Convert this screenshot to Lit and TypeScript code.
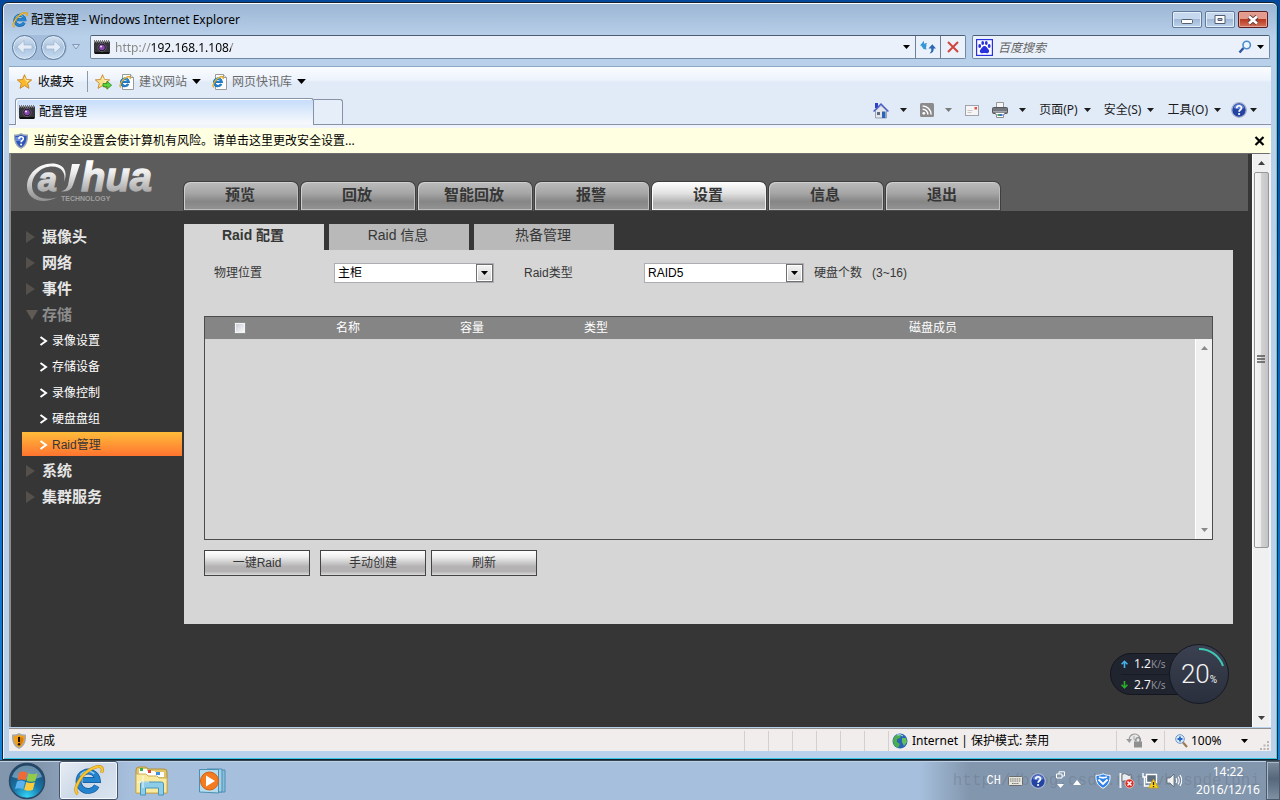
import { LitElement, html, css, svg } from "lit";
import { customElement, property, state } from "lit/decorators.js";
import { classMap } from "lit/directives/class-map.js";

const caret = (cls = "") => html`<svg class="caret ${cls}" width="7" height="4" viewBox="0 0 7 4" aria-hidden="true"><path d="M0 0h7L3.5 4z" fill="currentColor" /></svg>`;

const ieGlyph = svg`
  <path d="M24.5 21.5A10 10 0 1 1 25.6 15.5H10" fill="none" stroke="#12599f" stroke-width="6"/>
  <path d="M24.5 21.5A10 10 0 1 1 25.6 15.5H10" fill="none" stroke="#2383cc" stroke-width="4.600"/>
  <path d="M7.500 11A9.500 9.500 0 0 1 22 9" fill="none" stroke="#8fd6f7" stroke-width="1.600"/>
  <path d="M5 30C-1 26 8 9 20 3.500C28-.5 32 2 29.500 8" fill="none" stroke="#c98a12" stroke-width="3.200"/>
  <path d="M5 30C-1 26 8 9 20 3.500C28-.5 32 2 29.500 8" fill="none" stroke="#f8c934" stroke-width="2"/>`;

const ieIcon = (size: number) => html`<svg width=${size} height=${size} viewBox="0 0 32 32" aria-hidden="true">${ieGlyph}</svg>`;

const iePage = html`<svg width="16" height="16" viewBox="0 0 16 16" aria-hidden="true">
  <path d="M3.500.5h8l3 3v12h-11z" fill="#fdfdfd" stroke="#9a9a9a" /><path d="M11.500.5v3h3" fill="#e4e4e4" stroke="#9a9a9a" />
  <svg x="0" y="2" width="12" height="12" viewBox="0 0 32 32">${ieGlyph}</svg></svg>`;

const camIcon = html`<svg width="16" height="14" viewBox="0 0 16 14" aria-hidden="true">
  <rect y="1.500" width="16" height="12" fill="#34343a" />
  <path d="M0 1.500h16" stroke="#777" stroke-dasharray="1 1" stroke-width="3" />
  <path d="M1 13h14" stroke="#111" stroke-width="2" />
  <circle cx="8" cy="7.500" r="4.200" fill="#201c28" stroke="#5f5c66" /><circle cx="8" cy="7.500" r="2.800" fill="#8a46b0" /><circle cx="7" cy="6.500" r="1.100" fill="#e6d6f4" /></svg>`;

const star = (add: boolean) => html`<svg width="17" height="16" viewBox="0 0 17 16" aria-hidden="true">
  <path d="M7.500.7l2 4.800 5.200.4-4 3.400 1.300 5.100-4.500-2.800L3 14.400l1.300-5.100-4-3.400 5.200-.4z" fill=${add ? "#fbe08a" : "#fbb829"} stroke="#c5862a" stroke-width=".9" />
  <path d="M7.500 3l1.100 3.200 3 .3-2.400 1.900" fill="none" stroke="#fff0b0" />
  ${add ? svg`<path d="M8 9.500h4v-2.300l4.600 4-4.600 4v-2.500H8z" fill="#5ed13c" stroke="#238a1c" stroke-width=".8"/>` : null}</svg>`;

const helpIcon = html`<svg width="16" height="16" viewBox="0 0 16 16" aria-hidden="true">
  <circle cx="8" cy="8" r="7.300" fill="#2444a4" stroke="#a9b4cc" stroke-width="1.300" /><path d="M2.500 6a5.800 5.800 0 0 1 11 0q-5.500 2-11 0z" fill="#5f80d8" />
  <path d="M5.700 6.200C5.700 3 10.500 3 10.500 6c0 1.800-2.400 1.800-2.400 3.800" fill="none" stroke="#fff" stroke-width="1.700" /><circle cx="8.100" cy="12" r="1.100" fill="#fff" /></svg>`;

const shieldPath = "M7 .8c2 1.200 4 1.500 6.300 1.400C13.600 8 12.500 12.500 7 15.200 1.500 12.500.4 8 .7 2.200 3 2.300 5 2 7 .8z";
const shieldHelp = html`<svg width="14" height="16" viewBox="0 0 14 16" aria-hidden="true">
  <path d=${shieldPath} fill="#2f55b9" stroke="#9aa5b8" stroke-width="1.400" /><path d="M2 4q5 0 5-2v6H2z" fill="#6a8be0" />
  <path d="M4.900 6c0-3 4.400-3 4.400-.2 0 1.700-2.200 1.700-2.200 3.400" fill="none" stroke="#fff" stroke-width="1.600" /><circle cx="7.100" cy="11.500" r="1" fill="#fff" /></svg>`;
const shieldWarn = html`<svg width="14" height="16" viewBox="0 0 14 16" aria-hidden="true">
  <path d=${shieldPath} fill="#f0a01c" stroke="#a8a8a8" stroke-width="1.500" /><path d="M7 3v10q4-2 4.500-8Q9 5 7 3z" fill="#d87c0c" />
  <path d="M7 4v5" stroke="#1a1208" stroke-width="2" /><circle cx="7" cy="11.300" r="1.200" fill="#1a1208" /></svg>`;

const homeIcon = html`<svg width="16" height="17" viewBox="0 0 16 17" aria-hidden="true">
  <path d="M2 1h3v5H2z" fill="#2f3fd0" /><path d="M2.500 8.500L8 3.500l5.500 5v7.500h-11z" fill="#e2e5ea" stroke="#8790a4" stroke-width=".8" />
  <path d="M.6 9.500L8 2l7.400 7.500" fill="none" stroke="#4a5cc8" stroke-width="1.500" />
  <path d="M9 9.500h3.500v6.500H9z" fill="#2f62b4" /><path d="M4 10h3v3H4z" fill="#5f6b80" /></svg>`;
const rssIcon = html`<svg width="14" height="14" viewBox="0 0 14 14" aria-hidden="true"><rect width="14" height="14" rx="1.500" fill="#8b8b8b" />
  <circle cx="3.800" cy="10.300" r="1.400" fill="#fff" /><path d="M2.600 6.200a5.200 5.200 0 0 1 5.300 5.300M2.600 3a8.500 8.500 0 0 1 8.500 8.500" fill="none" stroke="#fff" stroke-width="1.500" /></svg>`;
const mailIcon = html`<svg width="14" height="11" viewBox="0 0 14 11" aria-hidden="true"><rect x=".5" y=".5" width="13" height="10" fill="#f5f5f5" stroke="#a0a4aa" />
  <path d="M2.500 5.500h5M2.500 7.500h4" stroke="#c9c9c9" /><path d="M9.500 2h2.500v2.500H9.500z" fill="#e05248" /></svg>`;
const printIcon = html`<svg width="16" height="16" viewBox="0 0 16 16" aria-hidden="true"><path d="M4.500.5h7V6h-7z" fill="#f7f7f7" stroke="#989898" />
  <rect x=".5" y="5.500" width="15" height="6" rx="1" fill="#74777d" stroke="#54575c" /><path d="M1 9.500h14" stroke="#a2a5aa" />
  <path d="M3.500 10.500h9v2h-1v3h-7v-3h-1z" fill="#fff" stroke="#8c8c8c" /><path d="M5.500 13h2.500" stroke="#3f9b6d" stroke-width="2" /><path d="M8 13h2.500" stroke="#3d6fc4" stroke-width="2" /></svg>`;

const scrollArrow = (down: boolean) => html`<svg width="7" height="4" viewBox="0 0 7 4" aria-hidden="true"><path d=${down ? "M0 0h7L3.5 4z" : "M0 4h7L3.5 0z"} fill="currentColor" /></svg>`;

const reset = css`
  *, *::before, *::after { box-sizing: border-box; }
  svg { display: block; flex: none; }
  button { font: inherit; color: inherit; background: none; border: 0; padding: 0; margin: 0; cursor: pointer; }
  a { color: inherit; text-decoration: none; }
  ul { list-style: none; margin: 0; padding: 0; }
`;

@customElement("browser-chrome")
export class BrowserChrome extends LitElement {
  static styles = [reset, css`
    :host { display: block; font: 12px/16px "Noto Sans", "Noto Sans CJK SC", sans-serif; color: #000; }
    .title { display: flex; align-items: center; height: 31px; padding: 2px 3px 0 3px; gap: 3px; }
    .title h1 { flex: 1; margin: 0; font-size: 12px; font-weight: 400; }
    .controls { display: flex; gap: 3px; align-items: center; }
    .ctl { display: grid; place-items: center; width: 30px; height: 17px; border: 1px solid #63799a; border-radius: 2px; box-shadow: inset 0 0 0 1px #e3eefb; background: linear-gradient(#c6d8ee 48%, #a1b9d6 50%, #bcd3ee); }
    .ctl.close { border-color: #5b1d1d; box-shadow: inset 0 0 0 1px #e6a498; background: linear-gradient(#e29b8d 48%, #b83a20 50%, #d2735c); }
    .nav { display: flex; align-items: center; height: 26px; margin-bottom: 6px; padding: 0 1px 0 3px; }
    .travel { display: flex; align-items: center; gap: 4px; margin-right: 5px; padding-right: 1px; border-radius: 13px; background: #a4bdda; }
    .orb { display: grid; place-items: center; width: 25px; height: 25px; border: 1px solid #5f7a9c; border-radius: 50%; background: linear-gradient(#d5e2f1, #a9c3df 50%, #c9ddf3); box-shadow: inset 0 0 0 1px #dce9f7; }
    .recent { margin-right: 10px; }
    .field { display: flex; align-items: center; height: 24px; border: 1px solid #7188a4; border-top-color: #4c5d74; border-radius: 2px; background: #eaf1fa; }
    .address { flex: 1; padding-left: 3px; gap: 5px; margin-right: 6px; }
    .address input, .search input { flex: 1; min-width: 0; border: 0; outline: 0; padding: 0; font: inherit; height: 20px; }
    .address input { color: transparent; caret-color: #000; background: linear-gradient(90deg, #858585 36px, #000 36px, #000 116px, #858585 116px); background-clip: text; -webkit-background-clip: text; }
    .address .cell { display: grid; place-items: center; width: 25px; height: 22px; border-left: 1px solid #6f8096; margin-left: -5px; }
    .address .drop { width: 18px; border: 0; }
    .search { width: 298px; padding: 0 5px 0 3px; gap: 5px; }
    .search input { background: none; font-style: italic; }
    .search input::placeholder { color: #666; opacity: 1; }
    .bars { border-top: 1px solid #8da6c4; background: linear-gradient(#fafcff, #edf3fc 13px, #e1ebf8 15px, #e1ebf8 56px, #f2f5fb 59px); padding-bottom: 3px; }
    .favs { display: flex; align-items: center; height: 29px; padding-left: 8px; }
    .fav { display: flex; align-items: center; gap: 4px; color: #6b6b6b; }
    .fav.strong { color: #000; }
    .fav + .fav { margin-left: 11px; }
    .fav .caret { width: 9px; height: 5px; color: #000; margin-left: 1px; }
    .sep { width: 1px; height: 21px; background: #8d99a8; margin: 0 7px 0 13px; }
    .favs .add { margin-right: 7px; }
    .tabs { display: flex; align-items: stretch; height: 29px; border-bottom: 1px solid #8792a4; padding: 2px 14px 0 6px; }
    .tab { display: flex; align-items: center; gap: 4px; width: 299px; padding-left: 3px; margin-bottom: -1px; border: 1px solid #8792a4; border-bottom: 0; border-radius: 3px 3px 0 0; background: linear-gradient(#c4dcfb, #f4f7fc 90%); box-shadow: inset 1px 1px #fff; text-align: left; }
    .newtab { width: 29px; margin: 1px 0 0; border: 1px solid #8792a4; border-left: 0; border-bottom: 0; border-radius: 0 3px 0 0; background: #e6eef9; }
    .cmds { display: flex; align-items: center; gap: 13px; margin-left: auto; padding-bottom: 2px; color: #1c1c1c; }
    .cmd { display: flex; align-items: center; gap: 6px; }
    .cmd.split { gap: 11px; }
    .cmd.tight { gap: 3px; margin-left: -3px; }
    .cmd.off .caret { color: #7b7b7b; }
    .info { display: flex; align-items: center; height: 25px; padding: 0 6px 0 5px; gap: 5px; background: #ffffe1; }
    .info a { flex: 1; }
    @media (max-width: 700px) { .search, .cmds { display: none; } }
  `];

  render() {
    return html`
      <header class="title">
        ${ieIcon(16)}
        <h1>配置管理 - Windows Internet Explorer</h1>
        <div class="controls">
          <button class="ctl" aria-label="最小化"><svg width="12" height="9" viewBox="0 0 12 9"><rect x=".5" y="4.500" width="11" height="4" rx="1" fill="#fff" stroke="#535f70" /></svg></button>
          <button class="ctl" aria-label="最大化"><svg width="12" height="10" viewBox="0 0 12 10"><path d="M1 .5h10v8H1zM4 3.500v2h4v-2z" fill="#fff" fill-rule="evenodd" stroke="#535f70" /></svg></button>
          <button class="ctl close" aria-label="关闭"><svg width="12" height="10" viewBox="0 0 12 10"><path d="M2 1.500l8 7M10 1.500l-8 7" stroke="#5a3a3a" stroke-width="4.400" /><path d="M2 1.500l8 7M10 1.500l-8 7" stroke="#fff" stroke-width="2.600" /></svg></button>
        </div>
      </header>
      <div class="nav">
        <div class="travel">
          <button class="orb" aria-label="后退"><svg width="17" height="16" viewBox="0 0 17 16"><path d="M1 8l7-6.500V6h8v4H8v4.500z" fill="#e4edf7" stroke="#9fb4ce" stroke-width=".7" /></svg></button>
          <button class="orb" aria-label="前进"><svg width="17" height="16" viewBox="0 0 17 16"><path d="M16 8L9 1.500V6H1v4h8v4.500z" fill="#e4edf7" stroke="#9fb4ce" stroke-width=".7" /></svg></button>
        </div>
        <button class="recent" aria-label="最近的网页"><svg width="8" height="6" viewBox="0 0 8 6"><path d="M.5.500h7L4 5z" fill="#d3e0f0" stroke="#8199b8" /></svg></button>
        <div class="field address">
          ${camIcon}
          <input aria-label="地址" value="http://192.168.1.108/" />
          <button class="cell drop" aria-label="显示地址列表">${caret()}</button>
          <button class="cell" aria-label="刷新"><svg width="16" height="14" viewBox="0 0 16 14"><path d="M0 5.500L4 .8v3c0 0 2-.8 3.300-.3C5.800 4 5.500 6 6.500 9.500 4 9.500 3 8 3 6z" fill="#3596d8" /><path d="M1 5.500h6L4 9.500z" fill="#3596d8" /><path d="M8.500 8.500l3.800-4.200L16 8.500h-2.300c.2 3-1.200 4.700-4.200 5 1.700-1.500 2-3 1.700-5z" fill="#2c68b4" /></svg></button>
          <button class="cell" aria-label="停止"><svg width="12" height="12" viewBox="0 0 12 12"><path d="M1 1l10 10M11 1L1 11" stroke="#d0453f" stroke-width="2" /></svg></button>
        </div>
        <div class="field search">
          <svg width="17" height="17" viewBox="0 0 17 17" aria-hidden="true"><rect x=".6" y=".6" width="15.800" height="15.800" fill="#fff" stroke="#2a32e0" stroke-width="1.200" />
            <g fill="#2a32e0"><ellipse cx="3.700" cy="7" rx="1.400" ry="1.900" /><ellipse cx="6.700" cy="4" rx="1.400" ry="1.900" /><ellipse cx="10.300" cy="4" rx="1.400" ry="1.900" /><ellipse cx="13.200" cy="7" rx="1.400" ry="1.900" /><path d="M8.500 7c2 0 2.500 2 4 3.500 1.700 2-.2 4.300-2 3.800-1.500-.4-2.500-.4-4 0-1.800.5-3.700-1.800-2-3.800C6 9 6.500 7 8.500 7z" /></g></svg>
          <input aria-label="搜索" placeholder="百度搜索" />
          <svg width="14" height="14" viewBox="0 0 14 14" aria-hidden="true"><path d="M1.500 12.500l4-4.500" stroke="#2d55a0" stroke-width="2.400" /><circle cx="8.700" cy="5" r="3.700" fill="#eef6fd" stroke="#4a8cd0" stroke-width="1.600" /></svg>
          <button aria-label="搜索选项">${caret()}</button>
        </div>
      </div>
      <div class="bars">
        <div class="favs">
          <button class="fav strong">${star(false)}收藏夹</button>
          <span class="sep"></span>
          <button class="add" aria-label="添加到收藏夹栏">${star(true)}</button>
          <button class="fav">${iePage}建议网站${caret()}</button>
          <button class="fav">${iePage}网页快讯库${caret()}</button>
        </div>
        <div class="tabs">
          <button class="tab">${camIcon}配置管理</button>
          <button class="newtab" aria-label="新选项卡"></button>
          <div class="cmds">
            <button class="cmd split" aria-label="主页">${homeIcon}${caret()}</button>
            <button class="cmd split off" aria-label="源">${rssIcon}${caret()}</button>
            <button class="cmd" aria-label="阅读邮件">${mailIcon}</button>
            <button class="cmd split" aria-label="打印">${printIcon}${caret()}</button>
            <button class="cmd">页面(P)${caret()}</button>
            <button class="cmd">安全(S)${caret()}</button>
            <button class="cmd">工具(O)${caret()}</button>
            <button class="cmd tight" aria-label="帮助">${helpIcon}${caret()}</button>
          </div>
        </div>
      </div>
      <div class="info">
        ${shieldHelp}
        <a href="#security">当前安全设置会使计算机有风险。请单击这里更改安全设置...</a>
        <button aria-label="关闭信息栏"><svg width="11" height="10" viewBox="0 0 11 10"><path d="M1.500 1l8 8M9.500 1l-8 8" stroke="#000" stroke-width="2.200" /></svg></button>
      </div>`;
  }
}

@customElement("scroll-rail")
export class ScrollRail extends LitElement {
  @property({ type: Boolean }) thumb = false;
  static styles = [reset, css`
    :host { display: flex; flex-direction: column; align-items: center; width: 17px; background: #f0f0f0; border-left: 1px solid #fff; color: #8a8a8a; }
    :host([thumb]) { color: #404040; }
    .end { display: grid; place-items: center; width: 17px; height: 18px; }
    .track { flex: 1; width: 15px; }
    .bar { display: grid; place-items: center; width: 15px; height: 70%; border: 1px solid #979797; border-radius: 2px; background: linear-gradient(90deg, #f6f6f6, #ececec 45%, #d2d2d4 50%, #c4c4c8); }
  `];
  render() {
    return html`<div class="end">${scrollArrow(false)}</div>
      <div class="track">${this.thumb ? html`<div class="bar"><svg width="8" height="9" viewBox="0 0 8 9"><path d="M0 1h8M0 4h8M0 7h8" stroke="#555" stroke-width="1.400" /></svg></div>` : null}</div>
      <div class="end">${scrollArrow(true)}</div>`;
  }
}

interface MenuItem { label: string; children?: string[]; }

@customElement("device-page")
export class DevicePage extends LitElement {
  @state() private section = "设置";
  @state() private tab = "Raid 配置";
  private sections = ["预览", "回放", "智能回放", "报警", "设置", "信息", "退出"];
  private tabs = ["Raid 配置", "Raid 信息", "热备管理"];
  private menu: MenuItem[] = [
    { label: "摄像头" }, { label: "网络" }, { label: "事件" },
    { label: "存储", children: ["录像设置", "存储设备", "录像控制", "硬盘盘组", "Raid管理"] },
    { label: "系统" }, { label: "集群服务" },
  ];

  static styles = [reset, css`
    :host { display: flex; min-height: 0; border: solid #6e6e6e; border-width: 1px 2px 0; border-left-color: #8a8a8a; border-right-color: #f4f4f4; background: #363636; font: 12px/16px "Liberation Sans", "Noto Sans CJK SC", sans-serif; color: #363636; }
    .doc { flex: 1; min-width: 0; }
    .head { display: flex; align-items: flex-end; height: 57px; margin-right: 4px; background: #5c5c5c; }
    .logo { width: 172px; padding-left: 14px; }
    .sections { display: flex; gap: 1px; }
    .section { width: 116px; height: 30px; padding: 0 2px 2px 0; border: 1px solid #3f3f3f; border-radius: 7px 7px 0 0; border-bottom-color: #4a4a4a; background: linear-gradient(#bcbcbc, #a6a6a6 40%, #868686 70%, #949494); box-shadow: inset 1px 1px #cfcfcf, inset -1px -1px #bdbdbd; font-size: 15px; font-weight: 700; line-height: 20px; text-align: center; }
    .section.on { background: linear-gradient(#fff, #e2e2e2 40%, #afafaf 75%, #bcbcbc); box-shadow: inset 1px 1px #fff, inset -1px -1px #efefef; }
    .body { display: flex; }
    .side { width: 173px; padding-top: 12px; font-size: 15px; }
    .side a { display: flex; align-items: center; height: 26px; padding: 2px 0 0 15px; gap: 7px; font-weight: 700; color: #e6e6e6; }
    .side a.open { color: #8c8c8c; }
    .side svg { width: 9px; }
    .side .open svg { width: 12px; margin-right: -3px; }
    .side .sub li { padding: 1px 2px 1px 11px; }
    .side .sub a { height: 24px; padding-left: 17px; gap: 4px; font-size: 12px; font-weight: 400; color: #fff; }
    .side .sub a.on { background: linear-gradient(#ffbc3a, #ff7430); color: #363636; }
    .main { flex: 1; min-width: 0; padding: 13px 19px 0 0; }
    .tabs { display: flex; gap: 5px; }
    .tab { width: 140px; height: 26px; padding: 0 2px 4px 0; background: #b9b9b9; font-size: 14px; }
    .tab.on { background: #d6d6d6; font-weight: 700; }
    .panel { padding: 13px 20px 48px; background: #d6d6d6; }
    .form { display: flex; align-items: center; height: 20px; margin-bottom: 33px; padding-left: 10px; }
    .form label { width: 120px; }
    .pick { position: relative; width: 160px; height: 20px; margin-right: 30px; }
    .pick select { appearance: none; width: 100%; height: 20px; border: 1px solid #abadb3; border-radius: 0; padding: 0 20px 0 3px; background: #fff; color: #000; font: inherit; }
    .pick span { position: absolute; top: 1px; right: 1px; bottom: 1px; width: 17px; display: grid; place-items: center; border: 1px solid #707070; background: linear-gradient(#f4f4f4, #d2d2d2); box-shadow: inset 0 0 0 1px #fff; color: #000; pointer-events: none; }
    .pick.last { margin-right: 10px; }
    .range { margin-left: 10px; }
    .grid { display: flex; flex-direction: column; height: 224px; margin-bottom: 10px; border: 1px solid #4c4c4c; }
    table { width: 100%; border-collapse: collapse; table-layout: fixed; background: #858585; color: #fff; }
    th { width: 124px; height: 22px; padding: 0; font-weight: 400; }
    th.check { width: 81px; padding-right: 12px; }
    th.wide { width: auto; padding-right: 4px; }
    input[type="checkbox"] { appearance: none; display: block; width: 12px; height: 12px; margin: 0 auto; border: 1px solid #f4f4f4; outline: 1px solid #8e8f8f; outline-offset: -1px; background: linear-gradient(135deg, #c3c8d0, #fff); box-shadow: inset 0 0 0 1px #f4f4f4; }
    .rows { display: flex; justify-content: flex-end; flex: 1; min-height: 0; }
    .acts { display: flex; gap: 5px; }
    .act { width: 106px; height: 26px; border: 1px solid #444; background: linear-gradient(#fff, #eee 25%, #b4b2b3 65%, #b4b2b3 85%, #dcdcdc); }
    .act:first-child { margin-right: 5px; }
  `];

  render() {
    return html`
      <div class="doc">
        <div class="head">
          <div class="logo">
            <svg width="136" height="57" viewBox="0 -8 136 57" role="img" aria-label="Dahua Technology">
              <defs><linearGradient id="silver" gradientUnits="userSpaceOnUse" x1="0" y1="0" x2="0" y2="40"><stop offset="0" stop-color="#fff" /><stop offset=".25" stop-color="#eee" /><stop offset=".75" stop-color="#a8a8a8" /><stop offset="1" stop-color="#8f8f8f" /></linearGradient></defs>
              <g fill="url(#silver)" stroke="url(#silver)" stroke-width="1.300" font-family="Liberation Sans, sans-serif" font-weight="700" font-style="italic">
                <path d="M39 20C43 11 40 1.500 27 1.500 12 1.500 2 13 2 24.500 2 37.500 17 43 32 35.500 19 39 7 35 7 24 7 13 16 4.500 27 4.500 37 4.500 41 11 39 20z" stroke="none" />
                <text x="13" y="29" font-size="34">a</text>
                <path d="M47 2h8l-7 21q-2 6-9 6.500h-3q5.500-1.500 7-6.500z" stroke="none" />
                <text x="56" y="29" font-size="40">hua</text>
              </g>
              <text x="36" y="39" font-family="Liberation Sans, sans-serif" font-size="7" font-weight="700" fill="#a0a0a0">TECHNOLOGY</text>
            </svg>
          </div>
          <nav class="sections">
            ${this.sections.map((s) => html`<button class=${classMap({ section: true, on: s === this.section })} @click=${() => (this.section = s)}>${s}</button>`)}
          </nav>
        </div>
        <div class="body">
          <nav class="side">
            <ul>
              ${this.menu.map((m) => html`<li>
                <a href="#${m.label}" class=${classMap({ open: !!m.children })}>
                  ${m.children
                    ? html`<svg width="12" height="10" viewBox="0 0 12 10"><path d="M0 0h12L6 10z" fill="#5f5a54" /></svg>`
                    : html`<svg width="9" height="12" viewBox="0 0 9 12"><path d="M0 0v12l9-6z" fill="#54514d" /></svg>`}${m.label}</a>
                ${m.children ? html`<ul class="sub">${m.children.map((c) => html`<li>
                  <a href="#${c}" class=${classMap({ on: c === "Raid管理" })}><svg width="8" height="10" viewBox="0 0 8 10"><path d="M1 1l5.500 4L1 9" fill="none" stroke="#fff" stroke-width="2" /></svg>${c}</a></li>`)}</ul>` : null}
              </li>`)}
            </ul>
          </nav>
          <main class="main">
            <div class="tabs" role="tablist">
              ${this.tabs.map((t) => html`<button role="tab" class=${classMap({ tab: true, on: t === this.tab })} @click=${() => (this.tab = t)}>${t}</button>`)}
            </div>
            <section class="panel">
              <div class="form">
                <label for="place">物理位置</label>
                <div class="pick"><select id="place"><option>主柜</option></select><span>${caret()}</span></div>
                <label for="kind">Raid类型</label>
                <div class="pick last"><select id="kind"><option>RAID5</option></select><span>${caret()}</span></div>
                <div>硬盘个数</div><div class="range">(3~16)</div>
              </div>
              <div class="grid">
                <table><thead><tr>
                  <th class="check"><input type="checkbox" aria-label="全选" /></th>
                  <th>名称</th><th>容量</th><th>类型</th><th class="wide">磁盘成员</th>
                </tr></thead></table>
                <div class="rows"><scroll-rail></scroll-rail></div>
              </div>
              <div class="acts">
                <button class="act">一键Raid</button><button class="act">手动创建</button><button class="act">刷新</button>
              </div>
            </section>
          </main>
        </div>
      </div>
      <scroll-rail thumb></scroll-rail>`;
  }
}

@customElement("speed-ball")
export class SpeedBall extends LitElement {
  static styles = [reset, css`
    :host { display: flex; align-items: center; font: 12px/20px "Noto Sans", sans-serif; color: #f2f2f2; }
    .rates { width: 78px; height: 42px; margin-right: -19px; padding-left: 10px; border: 1px solid #14161f; border-radius: 21px 0 0 21px; background: #20242f; }
    .rate { display: flex; align-items: center; height: 20px; }
    .rate + .rate { border-top: 1px solid #181b24; }
    .rate b { font-weight: 400; margin-left: 6px; }
    .rate small { font-size: 10px; color: #8c8f98; }
    .ball { position: relative; display: grid; place-items: center; width: 60px; height: 60px; border: 1px solid #161924; border-radius: 50%; background: linear-gradient(#3b4150, #2a2f3d); }
    .ball p { margin: 0; font: 300 26px/30px Roboto, sans-serif; }
    .ball small { font: 10px/12px Roboto, sans-serif; }
    .ball svg { position: absolute; inset: 0; }
  `];
  render() {
    const arrow = (d: string, c: string) => html`<svg width="7" height="8" viewBox="0 0 7 8"><path d=${d} fill="none" stroke=${c} stroke-width="1.600" /></svg>`;
    return html`<div class="rates">
        <div class="rate">${arrow("M3.500 8V1.500M.5 4.300l3-3 3 3", "#45b4e8")}<b>1.2</b><small>K/s</small></div>
        <div class="rate">${arrow("M3.500 0v6.500M.5 3.700l3 3 3-3", "#2bb32b")}<b>2.7</b><small>K/s</small></div>
      </div>
      <div class="ball"><svg width="58" height="58" viewBox="0 0 58 58"><path d="M29 4A25 25 0 0 1 53 21" fill="none" stroke="#3fc9b4" stroke-width="2" /></svg><p>20<small>%</small></p></div>`;
  }
}

@customElement("status-line")
export class StatusLine extends LitElement {
  static styles = [reset, css`
    :host { display: flex; align-items: center; height: 23px; padding-top: 1px; border-top: 1px solid #8e8e8e; background: #f1edec; font: 12px/16px "Noto Sans", "Noto Sans CJK SC", sans-serif; color: #000; }
    .msg { display: flex; flex: 1; align-items: center; gap: 5px; padding-left: 3px; }
    .slot { width: 24px; height: 20px; border-left: 1px solid #d4d0cf; }
    .zone { display: flex; align-items: center; gap: 4px; width: 228px; height: 20px; padding-left: 3px; border-left: 1px solid #d4d0cf; }
    .box { display: flex; align-items: center; height: 20px; padding-left: 9px; border-left: 1px solid #d4d0cf; }
    .lock { width: 48px; gap: 8px; }
    .zoom { width: 107px; padding: 0 2px 0 10px; gap: 3px; }
    .zoom span { flex: 1; }
    .grip { margin: 9px 0 0 9px; }
  `];
  render() {
    return html`
      <div class="msg">${shieldWarn}完成</div>
      ${[0, 1, 2, 3, 4, 5].map(() => html`<i class="slot"></i>`)}
      <div class="zone"><svg width="16" height="16" viewBox="0 0 16 16"><circle cx="8" cy="8" r="7.500" fill="#2a62b8" /><path d="M3 3q4-3 6-1l-1 3-3 1v3l3 2-2 4Q1 13 1 7z" fill="#4bb04a" /><path d="M10 5l4 0 1 4-3 4-2-4z" fill="#64c05c" /><path d="M5 2q4-1 6 1" stroke="#b9e2f5" fill="none" /></svg>Internet | 保护模式: 禁用</div>
      <div class="box lock"><svg width="17" height="15" viewBox="0 0 17 15"><path d="M3.500 8.500A5.500 5.500 0 1 1 12 11" fill="#e9e9e9" stroke="#9a9a9a" stroke-width="1.300" /><path d="M0 6h6L3.500 10z" fill="#9a9a9a" /><path d="M8 3v4h3" fill="none" stroke="#aaa" /><rect x="8" y="8.500" width="8" height="6" fill="#8f8f8f" /><path d="M9.800 8.500V6.800a2.200 2.200 0 0 1 4.400 0v1.700" fill="none" stroke="#8f8f8f" stroke-width="1.300" /></svg>${caret()}</div>
      <div class="box zoom"><svg width="13" height="14" viewBox="0 0 13 14"><path d="M8 8.500l4 4.500" stroke="#9a7a52" stroke-width="2.200" /><circle cx="5" cy="5" r="4.300" fill="#dcecfa" stroke="#6d94c4" /><path d="M5 2.500v5M2.500 5h5" stroke="#2467c4" stroke-width="1.800" /></svg><span>100%</span>${caret()}
        <svg class="grip" width="9" height="9" viewBox="0 0 9 9"><path d="M7 0h2v2H7zM7 3.500h2v2H7zM3.500 3.500h2v2h-2zM7 7h2v2H7zM3.500 7h2v2h-2zM0 7h2v2H0z" fill="#b9b5b4" /></svg></div>`;
  }
}

@customElement("task-bar")
export class TaskBar extends LitElement {
  static styles = [reset, css`
    :host { position: relative; display: flex; align-items: center; height: 40px; border-top: 1px solid #33424f; box-shadow: inset 0 1px #bdd0e6; background: linear-gradient(90deg, #8296ad 40px, #a6bfdc 130px, #a6bfdc calc(100% - 360px), #8296ad calc(100% - 310px)); font: 12px/18px "Noto Sans", sans-serif; color: #fff; }
    .start { margin-left: 8px; }
    .app { display: grid; place-items: center; width: 59px; height: 39px; margin-left: 13px; border: 1px solid #46566a; border-radius: 3px; background: linear-gradient(135deg, #e6ecf4, #cdd9e8 50%, #dbe5f1); box-shadow: inset 0 0 0 1px #f4f8fc; }
    .pin { margin-left: 17px; }
    .pin + .pin { margin-left: 31px; }
    .mark { position: absolute; right: 20px; top: 10px; font: 16px/20px "Liberation Mono", monospace; color: #5f6a76; opacity: .3; white-space: nowrap; }
    .tray { position: relative; display: flex; align-items: center; margin-left: auto; gap: 7px; height: 39px; }
    .lang { font: 12px/14px "Liberation Mono", monospace; }
    .stack { display: grid; justify-items: center; gap: 5px; margin: -3px 1px 0 3px; }
    .up { margin: 4px 7px 0 0; }
    .clock { width: 72px; text-align: center; margin: 0 0 0 3px; }
    .desk { width: 14px; height: 39px; margin-left: -5px; border: 1px solid #4b5b6c; background: linear-gradient(#7b8b9d, #55677a 45%, #7d90a4); box-shadow: inset 1px 1px #a9b8c8; }
  `];
  render() {
    return html`
      <button class="start" aria-label="开始"><svg width="38" height="38" viewBox="0 0 38 38">
        <defs><radialGradient id="orb" cx=".5" cy=".95" r=".9"><stop offset="0" stop-color="#35d5f5" /><stop offset=".45" stop-color="#1878ac" /><stop offset="1" stop-color="#1c4466" /></radialGradient></defs>
        <circle cx="19" cy="19" r="17.500" fill="url(#orb)" stroke="#2b4866" stroke-width="1.500" /><path d="M4 15a15.500 15.500 0 0 1 30 0q-14 5-30 0z" fill="#b5d2e3" opacity=".5" />
        <path d="M11 10.500q4-2 8.500.4l-2 7.700q-4-2-8-.4z" fill="#ef6a34" /><path d="M20.500 11.200q4 2 9 0l-2.200 7.800q-4.500 1.700-8.700-.2z" fill="#94cc48" />
        <path d="M9 19.500q4-2 8.200.3l-2 7.500q-4-2-8.200-.3z" fill="#5bb2ee" /><path d="M18.200 20q4.200 2 8.700.3l-2 7.500q-4 2-8.700 0z" fill="#fbcb3c" /></svg></button>
      <button class="app" aria-label="Internet Explorer">${ieIcon(31)}</button>
      <button class="pin" aria-label="资源管理器"><svg width="33" height="30" viewBox="0 0 33 30">
        <path d="M1 4q0-3 3-3h7l2 2h16q3 0 3 3v21H1z" fill="#e2c468" stroke="#b4913c" /><path d="M4 3h8v5H4zM12 5h8v5h-8zM20 6h9v5h-9z" fill="#fff" /><path d="M5 2h3v3H5z" fill="#37b24a" /><path d="M13 4h3v3h-3z" fill="#d64a3a" /><path d="M21 6h4v3h-4z" fill="#3d8fe0" />
        <path d="M1 8h10l2 2h9l2 2h8v15H1z" fill="#f8ea9e" stroke="#cdae5a" /><path d="M5.500 29V18q0-2 2-2h19q2 0 2 2v11h-5v-7h-13v7z" fill="#8ecde8" stroke="#4a94b8" /><path d="M8 10v12M2 16h12" stroke="#fff" stroke-width=".8" /></svg></button>
      <button class="pin" aria-label="媒体播放器"><svg width="29" height="28" viewBox="0 0 29 28"><path d="M14 3h12v22H14z" fill="#88bedb" stroke="#4d8fb4" /><path d="M8 2h15v23H8z" fill="#9fd0e8" stroke="#4d8fb4" /><path d="M.5 2.500h19V26L.5 25z" fill="#b4dcef" stroke="#4d8fb4" /><circle cx="10.500" cy="14" r="9" fill="#f47b20" stroke="#d45f10" /><path d="M7 8.500v11l9-5.500z" fill="#fff" /></svg></button>
      <span class="mark">http://blog.csdn.net/vbaspdelphi</span>
      <div class="tray">
        <span class="lang">CH</span>
        <svg width="15" height="11" viewBox="0 0 15 11"><rect x=".5" y="1.500" width="14" height="9" rx="1" fill="#e6e6e0" stroke="#6d6d6d" /><path d="M2 4h11M2 6h11M4 8.500h7" stroke="#77776f" stroke-dasharray="1.500 .7" /></svg>
        ${helpIcon}
        <div class="stack"><svg width="9" height="8" viewBox="0 0 9 8"><path d="M3 3V.8h5.500V5H6M.5 3H6v4H.5z" fill="none" stroke="#fff" /></svg>${caret()}</div>
        <svg class="up" width="8" height="5" viewBox="0 0 8 5"><path d="M0 5h8L4 0z" fill="#fff" /></svg>
        <svg width="16" height="16" viewBox="0 0 16 16"><path d="M8 .8c2 1.200 4.500 1.700 7 1.500.3 6-1.500 10-7 13C2.500 12.300.7 8.300 1 2.300c2.500.2 5-.3 7-1.500z" fill="#2f80ea" stroke="#fff" /><path d="M3.500 6.500L8 11l4.500-4.500M4 4q4 1.500 8 0" fill="none" stroke="#fff" stroke-width="1.800" /></svg>
        <svg width="17" height="17" viewBox="0 0 17 17"><path d="M2.500 1v15" stroke="#f4f4f4" stroke-width="2" /><path d="M4 2.500q3-2 5 0t4 0v7q-2 1.500-4 0t-5 0z" fill="#e9edf2" stroke="#5a5f66" stroke-width=".8" /><circle cx="11.500" cy="11.500" r="4.500" fill="#dc2f26" stroke="#f6dcd9" stroke-width=".7" /><path d="M9.500 9.500l4 4M13.500 9.500l-4 4" stroke="#fff" stroke-width="1.500" /></svg>
        <svg width="17" height="17" viewBox="0 0 17 17"><path d="M4.500 2.500h10v8h-10z" fill="#5c6d7f" stroke="#fff" stroke-width="1.400" /><path d="M1 1v4h3M2.500 5v9h6" fill="none" stroke="#fff" stroke-width="1.400" /><path d="M11.500 7l5 9h-10z" fill="#f9cf1d" stroke="#c39a10" stroke-width=".7" /><path d="M11.500 10v3M11.500 14v1.200" stroke="#2a2203" stroke-width="1.300" /></svg>
        <svg width="16" height="15" viewBox="0 0 16 15"><path d="M1 5h3l4-4v13L4 10H1z" fill="#f2f2f2" stroke="#5c6772" stroke-width=".8" /><path d="M10 5q1.500 2.500 0 5M12 3.500q2.500 4 0 8M14 2q3.500 5.500 0 11" fill="none" stroke="#fff" stroke-width="1.100" /></svg>
        <div class="clock">14:22<br />2016/12/16</div>
        <button class="desk" aria-label="显示桌面"></button>
      </div>`;
  }
}

@customElement("app-root")
export class AppRoot extends LitElement {
  static styles = css`
    * { box-sizing: border-box; }
    :host { display: flex; flex-direction: column; min-height: 100vh; background: linear-gradient(#04489c, #0a6fd0 60%, #1583d8); }
    .window { position: relative; display: flex; flex: 1; flex-direction: column; margin: 2px 2px 0; padding: 0 6px 8px; border: 1px solid #16222e; border-radius: 6px 6px 0 0; box-shadow: inset 0 1px #fff, inset 1px 0 #e8f3ff, inset -1px 0 #42d0ee, inset 0 -1px #35c6e6; background: linear-gradient(#9bb5d3, #b9d0ea 34px, #b9d1ea); }
    .page { flex: 1; margin-bottom: 1px; }
    .ball { position: absolute; right: 48px; bottom: 55px; }
  `;
  render() {
    return html`<div class="window">
        <browser-chrome></browser-chrome>
        <device-page class="page"></device-page>
        <status-line></status-line>
        <speed-ball class="ball"></speed-ball>
      </div>
      <task-bar></task-bar>`;
  }
}
